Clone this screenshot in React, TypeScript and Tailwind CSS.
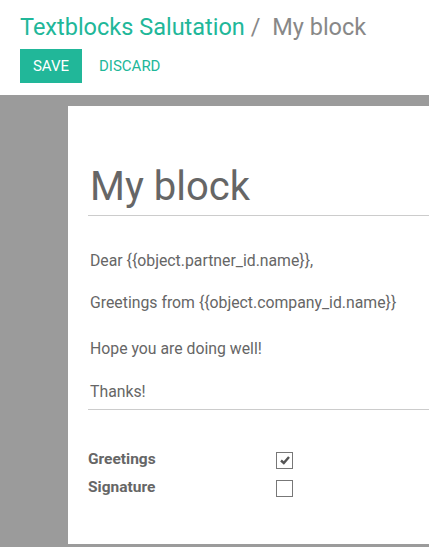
import React from 'react';

const App: React.FC = () => {
  return (
    <div className="w-[429px] h-[547px] overflow-hidden bg-white flex flex-col font-['Roboto',sans-serif]">
      <div className="px-5 pt-[12px] h-[95px] shrink-0">
        <h1 className="text-[23.5px] leading-[30px] text-[#21b799] whitespace-nowrap">
          Textblocks Salutation <span className="text-[#888]">/</span>{' '}
          <span className="text-[#888] ml-[6px]">My block</span>
        </h1>
        <div className="mt-[7px] flex items-center">
          <button className="bg-[#21b799] text-white text-[15px] w-[62px] h-[34px] uppercase">Save</button>
          <button className="ml-[17px] text-[#21b799] text-[15px] uppercase">Discard</button>
        </div>
      </div>
      <div className="flex-1 bg-[#9b9b9b] pt-[11px] pl-[68px] pb-[3px]">
        <div className="bg-white h-full pl-[20px] pt-[56px]">
          <div className="text-[40px] leading-[50px] text-[#666] pl-[2px] pb-[3px] border-b border-[#ccc]">My block</div>
          <div className="text-[15.8px] text-[#666] pl-[2px] pt-[35px] pb-[7px] border-b border-[#ccc] flex flex-col gap-[22px] leading-[20px] whitespace-nowrap">
            <p>Dear {'{{object.partner_id.name}}'},</p>
            <p>Greetings from {'{{object.company_id.name}}'}</p>
            <p className="mt-[4px]">Hope you are doing well!</p>
            <p className="mt-[1px]">Thanks!</p>
          </div>
          <div className="mt-[40px] flex flex-col gap-[8px] text-[15.5px] font-bold text-[#666]">
            <div className="flex items-center h-[20px]">
              <span className="w-[188px]">Greetings</span>
              <span className="w-[17px] h-[17px] border border-[#777] flex items-center justify-center">
                <svg viewBox="0 0 12 12" className="w-[12px] h-[12px]">
                  <path d="M2 6.5 L4.8 9 L10 3" fill="none" stroke="#555" strokeWidth="2.4" />
                </svg>
              </span>
            </div>
            <div className="flex items-center h-[20px]">
              <span className="w-[188px]">Signature</span>
              <span className="w-[17px] h-[17px] border border-[#777]" />
            </div>
          </div>
        </div>
      </div>
    </div>
  );
};

export default App;
